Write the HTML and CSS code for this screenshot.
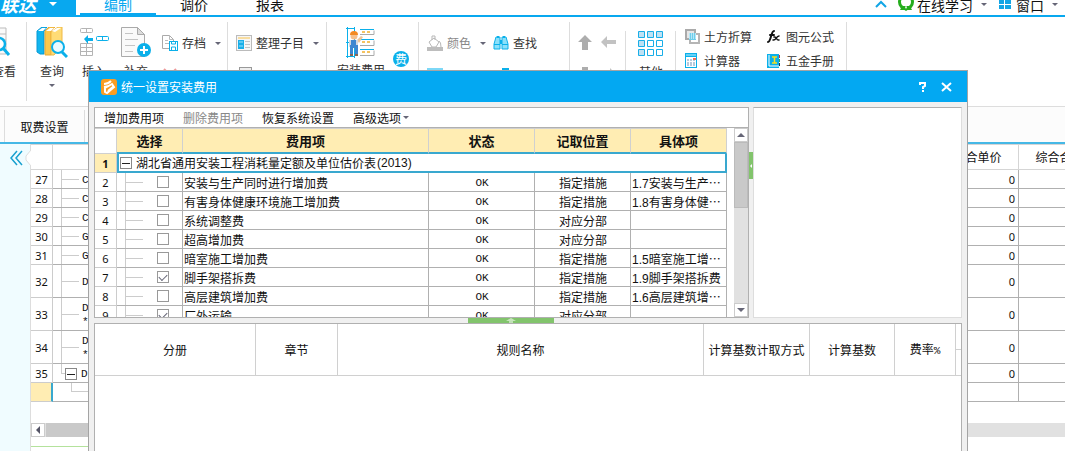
FILE: index.html
```html
<!DOCTYPE html>
<html lang="zh-CN">
<head>
<meta charset="utf-8">
<title>统一设置安装费用</title>
<link rel="stylesheet" href="styles.css">
</head>
<body>
<header class="topbar">
  <button class="brand"><span class="brand-name">联达</span><i class="caret caret-white"></i></button>
  <nav class="tabs">
    <a class="tab active" href="#">编制</a>
    <a class="tab" href="#">调价</a>
    <a class="tab" href="#">报表</a>
  </nav>
  <div class="top-tools">
    <button class="tool" aria-label="收起"><svg width="12" height="17" viewBox="0 0 12 17"><path d="M1 7l5-5 5 5" fill="none" stroke="#12a5e5" stroke-width="2"/></svg></button>
    <button class="tool tool-study"><svg width="17" height="17" viewBox="0 0 17 17"><circle cx="8" cy="2" r="6.500" fill="none" stroke="#24ad1c" stroke-width="3"/><path d="M4 6l-2 4h4l2-2 2 2h4l-2-4z" fill="#24ad1c"/><circle cx="8" cy="2" r="3" fill="#fff"/><path d="M5 9l3-3 3 3-3 2z" fill="#24ad1c"/><path d="M7 7l1-1 1 1-1 2z" fill="#fff"/></svg><span>在线学习</span><i class="caret"></i></button>
    <button class="tool tool-window"><svg width="12" height="17" viewBox="0 0 12 17"><path d="M0 0h5v4H0zM6 0h6v4H6zM0 5h5v4H0zM6 5h6v4H6z" fill="#12a5e5"/></svg><span>窗口</span><i class="caret"></i></button>
  </div>
</header>

<section class="ribbon">
  <div class="group g-view">
    <button class="big"><svg width="32" height="32" viewBox="0 0 32 32"><path d="M-2 1h23v26H-2zM-2 7h23M-2 13h23M-2 19h23M10 1v26" fill="#fafafa" stroke="#bbb"/><circle cx="14" cy="17" r="6" fill="#fff" stroke="#0bb0ea" stroke-width="2.500"/><path d="M18 21l6 7" stroke="#0bb0ea" stroke-width="3"/></svg><span>查看</span></button>
  </div>
  <div class="group g-edit">
    <button class="big"><svg width="32" height="32" viewBox="0 0 32 32"><path d="M1 4L6 0h5L8 4v23H4l-3-2z" fill="#12b5ee" stroke="#0799d5"/><path d="M2 4l4-3h4L7 4z" fill="#fff"/><path d="M9 4l4-4h6l-4 4v24H9z" fill="#fbc84c" stroke="#e9a935"/><path d="M10 4l4-3h4l-3 3z" fill="#fff"/><path d="M15 5l7-5h4v18l-8 10h-3z" fill="#ffdc76" stroke="#efb945"/><path d="M16 4l5-3h4l-6 4z" fill="#fff"/><circle cx="22" cy="20" r="6" fill="#eafaff" stroke="#0bb0ea" stroke-width="2"/><path d="M26 25l5 5" stroke="#0bb0ea" stroke-width="3"/></svg><span>查询</span><i class="caret"></i></button>
    <button class="big"><svg width="32" height="32" viewBox="0 0 32 32"><g fill="none" stroke="#b4b4b4"><rect x="2.500" y="1.500" width="12" height="4" rx="1"/><path d="M8.500 1v5"/><path d="M2.500 16.500h12v12h-12zM2 20.500h13M2 24.500h13M8.500 16v13"/></g><path d="M6 12l4-4v3h5v3h-5v3z" fill="#0bb0ea"/><rect x="18.500" y="9.500" width="12" height="4" rx="1" fill="#fff" stroke="#0bb0ea"/><path d="M24.500 10v4" stroke="#0bb0ea"/></svg><span>插入</span></button>
    <button class="big"><svg width="32" height="32" viewBox="0 0 32 32"><path d="M1.500.5h16l7 7v22h-23z" fill="#fafafa" stroke="#aaa"/><path d="M17.500.5v7h7z" fill="#ddd" stroke="#aaa"/><path d="M5 6.500h8M5 12.500h13M5 18.500h10M5 24.500h8" stroke="#c4c4c4"/><circle cx="24" cy="23" r="7" fill="#0bb0ea"/><path d="M24 19v8M20 23h8" stroke="#fff" stroke-width="2"/></svg><span>补充</span></button>
    <div class="stack">
      <button class="small"><svg width="16" height="16" viewBox="0 0 16 16"><path d="M.5.500h7l4 4v9H.5z" fill="#fff" stroke="#aaa"/><path d="M7.500.500v4h4M3 5.500h3M3 8.500h4" fill="none" stroke="#bbb"/><rect x="7.500" y="6.500" width="8" height="9" fill="#fff" stroke="#0bb0ea"/><path d="M9.500 6v3h4V6M9.500 15v-3h4v3" fill="none" stroke="#0bb0ea"/></svg><span>存档</span><i class="caret"></i></button>
      <button class="small" aria-label="删除"><svg width="16" height="16" viewBox="0 0 16 16"><path d="M2 2l12 12M14 2L2 14" stroke="#e99" stroke-width="2"/></svg></button>
    </div>
  </div>
  <div class="group g-sort">
    <div class="stack">
      <button class="small"><svg width="16" height="16" viewBox="0 0 16 16"><rect x=".5" y=".5" width="15" height="15" fill="#f6f6f6" stroke="#bbb"/><path d="M2 2h12v2H2z" fill="#f8dda0"/><path d="M2 5h6v9H2z" fill="#18aee8"/><path d="M3 7h4M3 11h4" stroke="#9ce3fc"/><path d="M9 6.500h5M9 9.500h5M9 12.500h5" stroke="#c4c4c4"/></svg><span>整理子目</span><i class="caret"></i></button>
      <button class="small" aria-label="锁定"><svg width="16" height="16" viewBox="0 0 16 16"><rect x="3.500" y=".5" width="12" height="14" fill="#eee" stroke="#999"/></svg></button>
    </div>
  </div>
  <div class="group g-fee">
    <button class="big"><svg width="32" height="32" viewBox="0 0 32 32"><path d="M1 1.500h9M1 15.500h7M1 29.500h9M2.500 0v31M9.500 0v31M15 2.500h14M15 12.500h14M15 22.500h14" stroke="#0bb0ea" fill="none"/><path d="M15 7.500h14v-4M15 18.500h14v-5M15 28.500h14v-5" stroke="#aaa" fill="none"/><path d="M17 5h8M17 15h8M17 25h8" stroke="#f2b02d" stroke-width="1.500" stroke-dasharray="3 2"/><path d="M12 13l4-4 2 1-4 6z" fill="#ecc69a"/><circle cx="9" cy="9" r="3.500" fill="#f5c08c"/><path d="M5 8a4 4 0 0 1 8 0z" fill="#f38a22"/><path d="M4 13h9v7H4z" fill="#d3d7df"/><path d="M6 13h5v5h2v10h-3v-7H8v7H5V18h1z" fill="#3c86d0"/><path d="M5 28h3M10 28h3" stroke="#865" stroke-width="2"/></svg><span>安装费用</span></button>
    <button class="fee-badge">费</button>
  </div>
  <div class="group g-find">
    <div class="stack">
      <button class="small muted"><svg width="16" height="16" viewBox="0 0 16 16"><path d="M2 7l5-4 5 4-3 5H5zM5 5V1h3v4M12 6q2 1 2 6" fill="#fff" stroke="#b7b7b7"/><path d="M0 12h16v4H0z" fill="#bdbdbd"/></svg><span>颜色</span><i class="caret"></i></button>
      <button class="small" aria-label="填充"><svg width="16" height="16" viewBox="0 0 16 16"><path d="M0 1h16v15H0z" fill="#7dd8f7"/></svg></button>
    </div>
    <div class="stack">
      <button class="small"><svg width="16" height="16" viewBox="0 0 16 16"><path d="M3 2h4v12H1v-5zM9 2h4l2 7v5H9z" fill="#8be0fa" stroke="#0bb0ea"/><path d="M7 5h2v4H7zM4 1h2v2H4zM10 1h2v2h-2z" fill="#0bb0ea"/><path d="M1 9.500h6M9 9.500h6" stroke="#0bb0ea"/></svg><span>查找</span></button>
      <button class="small" aria-label="结构"><svg width="16" height="16" viewBox="0 0 16 16"><path d="M10 2h5v8h-5z" fill="#b6eafb" stroke="#0bb0ea" stroke-width="2"/></svg></button>
    </div>
  </div>
  <div class="group g-move short">
    <div class="stack">
      <button class="small" aria-label="上移"><svg width="16" height="16" viewBox="0 0 16 16"><path d="M8 0l7 7h-4v8H5V7H1z" fill="#adadad"/></svg></button>
      <button class="small" aria-label="下移"><svg width="16" height="16" viewBox="0 0 16 16"><path d="M8 15l7-7h-4V0H5v8H1z" fill="#adadad"/></svg></button>
    </div>
    <div class="stack">
      <button class="small" aria-label="左移"><svg width="16" height="16" viewBox="0 0 16 16"><path d="M0 7l6-6v4h9v4H6v4z" fill="#c2c2c2"/></svg></button>
      <button class="small" aria-label="右移"><svg width="16" height="16" viewBox="0 0 16 16"><path d="M16 8l-7-7v4H1v5h8v5z" fill="#c2c2c2"/></svg></button>
    </div>
  </div>
  <div class="group g-other short">
    <button class="big"><svg width="26" height="26" viewBox="0 0 26 26"><g stroke="#18aee8" fill="#bfe1f3"><path d="M.5.500h6v6h-6zM9.500.500h6v6h-6zM18.500.500h6v6h-6zM.5 9.500h6v6h-6zM.5 18.500h6v6h-6z"/><path d="M9.500 9.500h6v6h-6zM18.500 9.500h6v6h-6zM9.500 18.500h6v6h-6zM18.500 18.500h6v6h-6z" fill="#fff"/></g></svg><span>其他</span></button>
  </div>
  <div class="group g-calc">
    <button class="small"><svg width="15" height="16" viewBox="0 0 15 16"><path d="M1 1h9v9H1z" fill="#e6e6e6" stroke="#aaa" stroke-width="2"/><path d="M5 5h9v9H5z" fill="#fff" stroke="#b5b5b5" stroke-width="2"/><path d="M4 4h7v7H4z" fill="#6dcdeb"/><path d="M4 5h7M4 7h7M4 9h7" stroke="#fff" stroke-dasharray="1 1"/></svg><span>土方折算</span></button>
    <button class="small"><svg width="15" height="16" viewBox="0 0 15 16"><g stroke="#111" fill="none" stroke-linecap="round"><path d="M1 13c3 0 3-11 6-11M3 6h4" stroke-width="2"/><path d="M7 8c3-1 2 4 5 3M12 7c-3 0-3 5-6 4" stroke-width="1.500"/></g></svg><span>图元公式</span></button>
    <button class="small"><svg width="15" height="16" viewBox="0 0 15 16"><rect x=".5" y=".5" width="11" height="14" fill="#fff" stroke="#0bb0ea"/><path d="M0 0h12v4H0z" fill="#0bb0ea"/><path d="M1 2h10" stroke="#c7f0ff"/><path d="M2 7h8M2 10h8M2 12h8" stroke="#7193b8" stroke-dasharray="2 1"/><path d="M8 5h3v2H8z" fill="#f26b59"/></svg><span>计算器</span></button>
    <button class="small"><svg width="15" height="16" viewBox="0 0 15 16"><path d="M0 1h12v14H0z" fill="#0bb0ea"/><path d="M2 2v11h10" fill="none" stroke="#fff"/><path d="M5 4h5M5 10h5M7.500 4v6" stroke="#f9df21" stroke-width="1.500"/><path d="M12 2h1v3h-1z" fill="#c34"/><path d="M12 6h1v3h-1z" fill="#3a4"/><path d="M12 10h1v3h-1z" fill="#234"/></svg><span>五金手册</span></button>
  </div>
</section>

<div class="doc-tabs"><a class="doc-tab" href="#">取费设置</a></div>

<main class="workspace">
  <aside class="side"><button class="side-toggle" aria-label="展开"><svg width="23" height="20" viewBox="0 0 23 20"><path d="M23 2l-5 6v4l5 6z" fill="#fff"/><path d="M23 2l-5 6v4l5 6" fill="none" stroke="#ddd"/><path d="M9 3l-6 7 6 7M14 3l-6 7 6 7" fill="none" stroke="#18a0cf" stroke-width="1.500"/></svg></button></aside>
  <div class="sheet-area">
    <table class="sheet">
      <colgroup><col class="w-num"><col><col class="w-price"><col class="w-price"></colgroup>
      <thead><tr><th></th><th></th><th>综合单价</th><th>综合合价</th></tr></thead>
      <tbody>
        <tr><td class="n">27</td><td class="t"><span class="leaf">C</span></td><td class="v">0</td><td></td></tr>
        <tr><td class="n">28</td><td class="t"><span class="leaf">C</span></td><td class="v">0</td><td></td></tr>
        <tr><td class="n">29</td><td class="t"><span class="leaf">C</span></td><td class="v">0</td><td></td></tr>
        <tr><td class="n">30</td><td class="t"><span class="leaf">G</span></td><td class="v">0</td><td></td></tr>
        <tr><td class="n">31</td><td class="t"><span class="leaf">G</span></td><td class="v">0</td><td></td></tr>
        <tr class="tall"><td class="n">32</td><td class="t"><span class="leaf">D</span></td><td class="v">0</td><td></td></tr>
        <tr class="tall"><td class="n">33</td><td class="t"><span class="leaf">D<br>*</span></td><td class="v">0</td><td></td></tr>
        <tr class="tall"><td class="n">34</td><td class="t"><span class="leaf">D<br>*</span></td><td class="v">0</td><td></td></tr>
        <tr><td class="n">35</td><td class="t t-end"><span class="branch"><button class="fold" aria-label="折叠"></button>D</span></td><td class="v">0</td><td></td></tr>
        <tr><td class="n current"></td><td class="t-sub"><span class="elbow"></span></td><td></td><td></td></tr>
      </tbody>
    </table>
    <div class="hscroll"><button class="arrow-left" aria-label="向左"></button><span class="hthumb"></span></div>
    <div class="status-line"></div>
  </div>
</main>

<section class="dialog" role="dialog" aria-label="统一设置安装费用">
  <div class="title">
    <svg width="16" height="16" viewBox="0 0 16 16"><rect width="16" height="16" rx="3" fill="#f99d24"/><path d="M3 5q4 0 7-3M3 8l5-1M4 13V9l7-4 2 3-7 6zM7 12l6-5" fill="none" stroke="#fff" stroke-width="2"/></svg>
    <h1>统一设置安装费用</h1>
    <button class="win-btn" aria-label="帮助"><svg width="12" height="12" viewBox="0 0 12 12"><path d="M3 4V2h5v3L6 6v2M6 9v2" fill="none" stroke="#fff" stroke-width="2"/></svg></button>
    <button class="win-btn" aria-label="关闭"><svg width="12" height="12" viewBox="0 0 12 12"><path d="M1 2l9 8M10 2l-9 8" stroke="#fff" stroke-width="2"/></svg></button>
  </div>
  <div class="dialog-body">
    <div class="upper">
      <div class="panel fees">
        <div class="toolbar">
          <button>增加费用项</button><button disabled>删除费用项</button><button>恢复系统设置</button><button class="more">高级选项<i class="caret"></i></button>
        </div>
        <div class="grid-wrap">
          <div class="grid-clip">
            <table class="grid">
              <colgroup><col class="w-num"><col class="w-pick"><col><col class="w-state"><col class="w-place"><col class="w-place"></colgroup>
              <thead><tr><th class="corner"></th><th>选择</th><th>费用项</th><th>状态</th><th>记取位置</th><th>具体项</th></tr></thead>
              <tbody>
                <tr class="selected"><td class="n">1</td><td colspan="5" class="root"><span class="root-row"><button class="fold" aria-label="折叠"></button>湖北省通用安装工程消耗量定额及单位估价表<span class="digits">(2013)</span></span></td></tr>
                <tr><td class="n">2</td><td class="pick"><input type="checkbox" aria-label="安装与生产同时进行增加费"></td><td>安装与生产同时进行增加费</td><td class="c mono">OK</td><td class="c">指定措施</td><td><span class="digits">1.7</span>安装与生产⋯</td></tr>
                <tr><td class="n">3</td><td class="pick"><input type="checkbox" aria-label="有害身体健康环境施工增加费"></td><td>有害身体健康环境施工增加费</td><td class="c mono">OK</td><td class="c">指定措施</td><td><span class="digits">1.8</span>有害身体健⋯</td></tr>
                <tr><td class="n">4</td><td class="pick"><input type="checkbox" aria-label="系统调整费"></td><td>系统调整费</td><td class="c mono">OK</td><td class="c">对应分部</td><td></td></tr>
                <tr><td class="n">5</td><td class="pick"><input type="checkbox" aria-label="超高增加费"></td><td>超高增加费</td><td class="c mono">OK</td><td class="c">对应分部</td><td></td></tr>
                <tr><td class="n">6</td><td class="pick"><input type="checkbox" aria-label="暗室施工增加费"></td><td>暗室施工增加费</td><td class="c mono">OK</td><td class="c">指定措施</td><td><span class="digits">1.5</span>暗室施工增⋯</td></tr>
                <tr><td class="n">7</td><td class="pick"><input type="checkbox" checked aria-label="脚手架搭拆费"></td><td>脚手架搭拆费</td><td class="c mono">OK</td><td class="c">指定措施</td><td><span class="digits">1.9</span>脚手架搭拆费</td></tr>
                <tr><td class="n">8</td><td class="pick"><input type="checkbox" aria-label="高层建筑增加费"></td><td>高层建筑增加费</td><td class="c mono">OK</td><td class="c">指定措施</td><td><span class="digits">1.6</span>高层建筑增⋯</td></tr>
                <tr><td class="n">9</td><td class="pick"><input type="checkbox" checked aria-label="厂外运输"></td><td>厂外运输</td><td class="c mono">OK</td><td class="c">对应分部</td><td></td></tr>
              </tbody>
            </table>
          </div>
          <div class="vscroll"><button class="arrow up" aria-label="向上"></button><span class="vthumb"></span><button class="arrow down" aria-label="向下"></button></div>
        </div>
      </div>
      <div class="vsplit"><span class="vgrip"></span></div>
      <div class="panel preview"></div>
    </div>
    <div class="hsplit"><span class="hgrip"><svg width="10" height="5" viewBox="0 0 10 5"><path d="M5 0l5 3H0z" fill="#c8e6bd"/><path d="M3 4h4" stroke="#fff"/></svg></span></div>
    <div class="lower">
      <table class="rules">
        <colgroup><col class="w-book"><col class="w-chapter"><col><col class="w-method"><col class="w-base"><col class="w-rate"><col class="w-tail"></colgroup>
        <thead>
          <tr><th rowspan="2">分册</th><th rowspan="2">章节</th><th rowspan="2">规则名称</th><th rowspan="2">计算基数计取方式</th><th rowspan="2">计算基数</th><th rowspan="2">费率<span class="mono">%</span></th><th></th></tr>
          <tr><th></th></tr>
        </thead>
      </table>
    </div>
  </div>
</section>
</body>
</html>
```

FILE: styles.css
```css
* { box-sizing: border-box; }
body {
  margin: 0;
  height: 100vh;
  overflow: hidden;
  display: flex;
  flex-direction: column;
  position: relative;
  background: #fff;
  color: #111;
  font: 12px/16px "Noto Sans CJK SC", sans-serif;
}
button {
  margin: 0;
  padding: 0;
  border: 0;
  background: none;
  color: inherit;
  font: inherit;
}
a { color: inherit; text-decoration: none; }
svg { display: block; flex: none; }
table { border-collapse: separate; border-spacing: 0; table-layout: fixed; }
.caret {
  flex: none;
  width: 0;
  height: 0;
  border: 3px solid transparent;
  border-top-color: #667;
  border-bottom: 0;
}
.caret-white { border-width: 4px; border-bottom: 0; border-top-color: #fff; }

/* top bar */
.topbar {
  flex: none;
  height: 17px;
  display: flex;
  align-items: flex-end;
  border-bottom: 2px solid #08a8ef;
}
.brand {
  width: 76px;
  height: 17px;
  margin-bottom: -2px;
  background: #08a8ef;
  color: #fff;
  display: flex;
  align-items: flex-end;
  gap: 13px;
  padding-bottom: 4px;
}
.brand .caret { margin-bottom: 7px; }
.brand-name { width: 36px; font-size: 18px; line-height: 18px; font-weight: 700; font-style: italic; }
.tabs { display: flex; flex: 1; padding-left: 4px; }
.tab { width: 76px; text-align: center; font-size: 14px; line-height: 18px; border-bottom: 2px solid transparent; }
.tab.active { color: #08a8ef; border-color: #08a8ef; }
.top-tools { display: flex; align-items: flex-end; padding-right: 7px; font-size: 14px; line-height: 20px; }
.tool { display: flex; align-items: flex-end; gap: 2px; line-height: 20px; }
.tool .caret { margin: 0 0 9px 6px; }
.tool svg { margin-bottom: -2px; }
.tool-study { margin-left: 11px; }
.tool-window { margin-left: 12px; }
.tool-window span { margin-left: 3px; }

/* ribbon */
.ribbon {
  flex: none;
  height: 90px;
  padding-top: 5px;
  display: flex;
  align-items: flex-start;
  overflow: hidden;
  color: #333;
  border-bottom: 1px solid #ddd;
}
.group { flex: none; height: 79px; display: flex; border-right: 1px solid #ddd; }
.group.short { height: 70px; margin-top: 9px; }
.big { display: flex; flex-direction: column; align-items: center; flex: none; padding-top: 5px; }
.big span { margin-top: 4px; white-space: nowrap; }
.big .caret { margin-top: 5px; }
.stack { display: flex; flex-direction: column; gap: 16px; padding-top: 13px; }
.small { display: flex; align-items: center; gap: 4px; height: 16px; white-space: nowrap; }
.small .caret { margin-left: 5px; }
.muted { color: #888; }
.g-view { width: 27px; justify-content: flex-end; padding-right: 9px; }
.g-view svg { margin-left: -6px; }
.g-edit { width: 201px; padding-left: 9px; gap: 10px; }
.g-sort { width: 99px; padding-left: 8px; }
.g-fee { width: 92px; padding-left: 10px; gap: 8px; }
.g-fee .big span { margin-top: 3px; }
.g-find { width: 151px; padding-left: 8px; gap: 7px; }
.g-move { width: 56px; padding-left: 7px; gap: 8px; }
.g-move .stack { padding-top: 4px; }
.g-other { width: 50px; padding-left: 12px; }
.g-other .big { padding-top: 0; }
.g-other .big span { margin-top: 7px; }
.g-calc {
  width: 171px;
  display: grid;
  grid-template-columns: 82px 82px;
  grid-auto-rows: 16px;
  row-gap: 8px;
  padding: 7px 0 0 9px;
}
.fee-badge {
  width: 16px;
  height: 16px;
  margin-top: 29px;
  border-radius: 50%;
  background: #0bb0ea;
  color: #fff;
}

/* document tabs */
.doc-tabs {
  flex: none;
  height: 37px;
  padding: 3px 4px 0;
  border-bottom: 2px solid #45b8e6;
  background: #fcfcfc;
}
.doc-tab {
  display: block;
  width: 81px;
  height: 32px;
  line-height: 34px;
  text-align: center;
  border: solid #ddd;
  border-width: 0 1px;
}

/* background sheet */
.workspace { flex: 1; min-height: 0; display: flex; }
.side { flex: none; width: 31px; background: #f0fcff; border-right: 1px solid #ddd; }
.side-toggle { display: block; margin: 4px 0 0 8px; }
.sheet-area { flex: 1; min-width: 0; overflow: hidden; }
.sheet { width: calc(100% + 36px); }
.w-num { width: 22px; }
.w-price { width: 82px; }
.sheet th { height: 26px; padding: 0; font-weight: 400; border: solid #d5d5d5; border-width: 1px 1px 1px 0; }
.sheet td { height: 19px; padding: 2px 0 0; border: solid #b0b0b0; border-width: 0 1px 1px 0; line-height: 14px; }
.sheet .tall td { height: 33px; }
.n, .sheet .v { font-family: "Noto Sans", sans-serif; font-size: 11px; }
.n { text-align: center; }
.sheet .n { border-color: #ccc; }
.sheet .v { text-align: right; padding-right: 3px; }
.sheet .current { background: #ffedb3; border-right: 2px solid #39a8cf; }
.leaf, .mono { font-family: "Liberation Mono", monospace; font-size: 11px; }
.digits { font-family: "Liberation Sans", sans-serif; font-size: 12px; line-height: 12px; }
.sheet .t { padding-left: 8px; background: linear-gradient(#ccc, #ccc) 8px 0 / 1px 100% no-repeat, linear-gradient(#ccc, #ccc) 8px 50% / 18px 1px no-repeat; }
.leaf { display: block; padding-left: 21px; }
.sheet .t-end { background-size: 1px 50%, 5px 1px; }
.branch { display: flex; align-items: center; gap: 4px; padding-left: 4px; font: 11px/14px "Liberation Mono", monospace; }
.fold { flex: none; width: 12px; height: 12px; border: 1px solid #888; background: linear-gradient(#222, #222) center / 8px 1px no-repeat #fff; }
.sheet .t-sub { padding: 0; }
.elbow { display: block; margin: 0 0 9px 18px; width: 18px; height: 9px; border: solid #ccc; border-width: 0 0 1px 1px; }
.hscroll { display: flex; gap: 1px; height: 14px; margin-top: 21px; background: #e1e1e1; }
.hthumb { width: 70%; background: #c9c9c9; }
.arrow-left { width: 14px; background: #fff; border: 1px solid #ccc; display: flex; align-items: center; justify-content: center; }
.arrow-left::before { content: ""; border: 4px solid transparent; border-right-color: #556; border-left: 0; }
.status-line { width: 50%; margin-top: 9px; border-top: 1px solid #b4e29c; }

/* dialog window over the sheet */
.dialog {
  position: absolute;
  top: 70px;
  left: 88px;
  right: 97px;
  bottom: 0;
  display: flex;
  flex-direction: column;
  border: 1px solid #a4a4a4;
  border-bottom: 0;
  background: #f0f0f0;
}
.title {
  flex: none;
  height: 31px;
  display: flex;
  align-items: center;
  padding: 0 14px 0 12px;
  background: #03a8f2;
  color: #fff;
}
.title h1 { flex: 1; margin: 0 0 0 4px; font-size: 12px; font-weight: 400; }
.win-btn { margin-left: 12px; }
.dialog-body { flex: 1; min-height: 0; display: flex; flex-direction: column; padding: 5px 5px 0; }
.upper { flex: none; height: 211px; display: flex; }
.panel { background: #fff; border: 1px solid #b0b0b0; }
.fees { flex: 1; min-width: 0; display: flex; flex-direction: column; }
.preview { flex: none; width: 209px; border-color: #b0b0b0 #ddd #ddd; }
.toolbar { flex: none; height: 20px; display: flex; gap: 19px; padding-left: 9px; border-bottom: 1px solid #b0b0b0; }
.toolbar button:disabled { color: #888; }
.more { display: flex; align-items: center; gap: 2px; }
.grid-wrap { flex: 1; min-height: 0; display: flex; gap: 7px; }
.grid-clip { flex: 1; min-width: 0; overflow: hidden; }
.grid { width: 100%; }
.w-pick { width: 66px; }
.w-state { width: 106px; }
.w-place { width: 96px; }
.grid th { height: 26px; padding: 0; background: #ffedb3; font-size: 13px; font-weight: 700; border: solid #d0d0d0; border-width: 1px 1px 2px 0; border-bottom-color: #39a8cf; }
.grid .corner { background: #fff; border-bottom: 1px solid #d0d0d0; }
.grid td { height: 19px; padding: 2px 0 0 1px; line-height: 16px; border: solid #b0b0b0; border-width: 0 1px 1px 0; white-space: nowrap; overflow: hidden; }
.grid .c { text-align: center; }
.grid .n { padding: 2px 0 0; border-color: #ccc; }
.selected .n { background: #ffedb3; font-weight: 700; }
.grid .root { border: 2px solid #39a8cf; border-top: 0; padding: 1px 0 0; }
.root-row { display: flex; align-items: center; gap: 4px; padding-left: 1px; }
.root-row .digits { margin-left: -3px; }
.grid .pick { background: linear-gradient(#ccc, #ccc) 8px 0 / 1px 100% no-repeat, linear-gradient(#ccc, #ccc) 8px 50% / 18px 1px no-repeat; padding: 0 0 0 40px; }
.pick input { appearance: none; display: block; margin: 0; width: 12px; height: 12px; border: 1px solid #999; background: #fff; }
.pick input:checked::after { content: ""; display: block; width: 7px; height: 4px; margin: 2px 0 0 1px; border: solid #667; border-width: 0 0 1px 1px; transform: rotate(-45deg); }
.vscroll { flex: none; width: 14px; display: flex; flex-direction: column; background: #e1e1e1; }
.vthumb { height: 66px; background: #c9c9c9; border: 1px solid #bbb; }
.arrow { flex: none; height: 14px; background: #fff; border: 1px solid #ccc; display: flex; align-items: center; justify-content: center; }
.arrow::before { content: ""; border: 4px solid transparent; }
.up::before { border-bottom-color: #667; border-top: 0; }
.down::before { border-top-color: #667; border-bottom: 0; }
.down { margin-top: auto; }
.vsplit { flex: none; width: 4px; }
.vgrip { display: flex; align-items: center; justify-content: center; height: 27px; margin-top: 45px; background: #82c46c; }
.vgrip::before { content: ""; border: 2px solid transparent; border-right-color: #fff; border-left: 0; }
.hsplit { flex: none; height: 5px; display: flex; justify-content: center; }
.hgrip { width: 86px; margin-right: 34px; background: #82c46c; display: flex; align-items: center; justify-content: center; }
.lower { flex: 1; min-height: 0; background: #fff; border: 1px solid #b0b0b0; border-bottom: 0; overflow: hidden; }
.rules { width: 100%; }
.rules th { height: 26px; padding: 0; font-weight: 400; border: solid #d0d0d0; border-width: 0 1px 1px 0; white-space: nowrap; }
.rules th:last-child { border-right: 0; }
.rules th[rowspan] { border-right: 1px solid #d0d0d0; }
.w-book { width: 161px; }
.w-chapter { width: 82px; }
.w-method { width: 106px; }
.w-base { width: 85px; }
.w-rate { width: 61px; }
.w-tail { width: 5px; }
```
